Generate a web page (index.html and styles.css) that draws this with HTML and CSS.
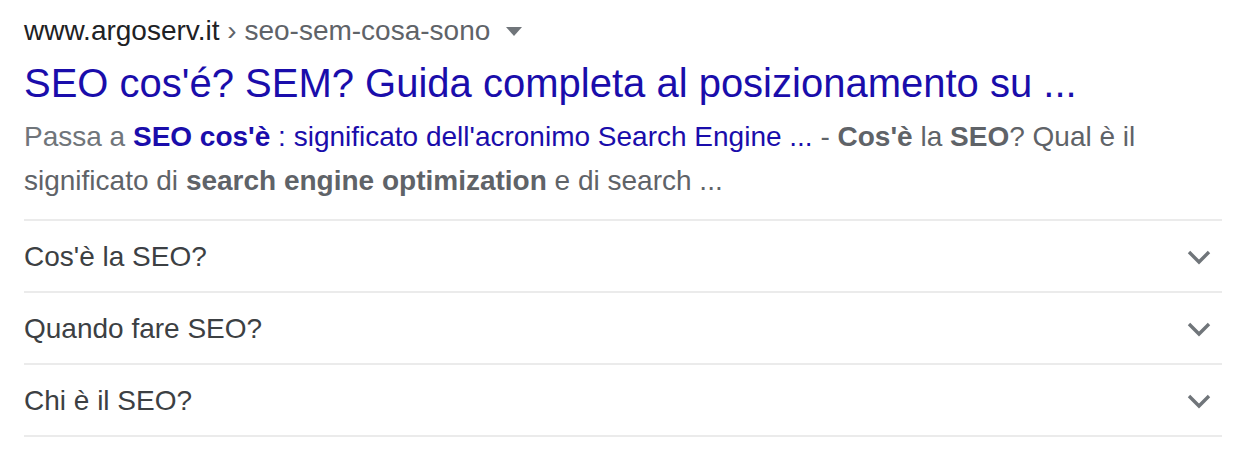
FILE: index.html
```html
<!DOCTYPE html>
<html lang="it">
<head>
	<meta charset="UTF-8">
	<meta name="viewport" content="width=device-width, initial-scale=1.0">
	<title>SEO cos'é? SEM?</title>
	<link rel="stylesheet" href="styles.css">
</head>
<body>
	<div class="result">
		<!-- url -->
		<div class="cite">
			<span class="domain">www.argoserv.it</span>
			<span class="path"> › seo-sem-cosa-sono</span>
			<span class="caret"></span>
		</div>

		<!-- titolo -->
		<a class="title" href="#">SEO cos'é? SEM? Guida completa al posizionamento su ...</a>

		<!-- snippet -->
		<div class="snippet">
			<span class="jump">Passa a</span> <a class="jumplink" href="#"><b>SEO cos'è</b> : significato dell'acronimo Search Engine ...</a> - <b>Cos'è</b> la <b>SEO</b>? Qual è il significato di <b>search engine optimization</b> e di search ...
		</div>

		<!-- domande -->
		<div class="faq">
			<div class="faq-row">
				<span>Cos'è la SEO?</span>
				<svg class="chevron" viewBox="0 0 24 16"><polyline points="2,3 12,13 22,3"/></svg>
			</div>
			<div class="faq-row">
				<span>Quando fare SEO?</span>
				<svg class="chevron" viewBox="0 0 24 16"><polyline points="2,3 12,13 22,3"/></svg>
			</div>
			<div class="faq-row">
				<span>Chi è il SEO?</span>
				<svg class="chevron" viewBox="0 0 24 16"><polyline points="2,3 12,13 22,3"/></svg>
			</div>
		</div>
	</div>
</body>
</html>
```

FILE: styles.css
```css
* {
	margin: 0px;
	padding: 0px;
	box-sizing: border-box;
}

body {
	font-family: 'Liberation Sans', Arial, sans-serif;
	background-color: #fff;
}

.result {
	width: 1222px;
	padding-left: 24px;
	padding-top: 14px;
}

.cite {
	display: flex;
	align-items: center;
	height: 34px;
	font-size: 28px;
	white-space: pre;
}

.domain {
	color: #202124;
}

.path {
	color: #5f6368;
}

.caret {
	width: 0px;
	height: 0px;
	margin-left: 16px;
	border-left: 8px solid transparent;
	border-right: 8px solid transparent;
	border-top: 9px solid #70757a;
}

.title {
	display: block;
	margin-top: 11px;
	font-size: 40px;
	line-height: 48px;
	color: #1a0dab;
	text-decoration: none;
}

.snippet {
	margin-top: 8px;
	font-size: 28px;
	line-height: 44px;
	color: #5f6368;
}

.jump {
	color: #70757a;
}

.jumplink {
	color: #1a0dab;
	text-decoration: none;
}

.snippet b {
	color: #5f6368;
}

.jumplink b {
	color: #1a0dab;
}

.faq {
	margin-top: 16px;
	border-top: 2px solid #ebebeb;
}

.faq-row {
	display: flex;
	align-items: center;
	justify-content: space-between;
	height: 72px;
	padding-top: 2px;
	border-bottom: 2px solid #ebebeb;
	font-size: 28px;
	color: #3c4043;
}

.chevron {
	width: 24px;
	height: 16px;
	margin-right: 11px;
	fill: none;
	stroke: #70757a;
	stroke-width: 3.4;
}
```
